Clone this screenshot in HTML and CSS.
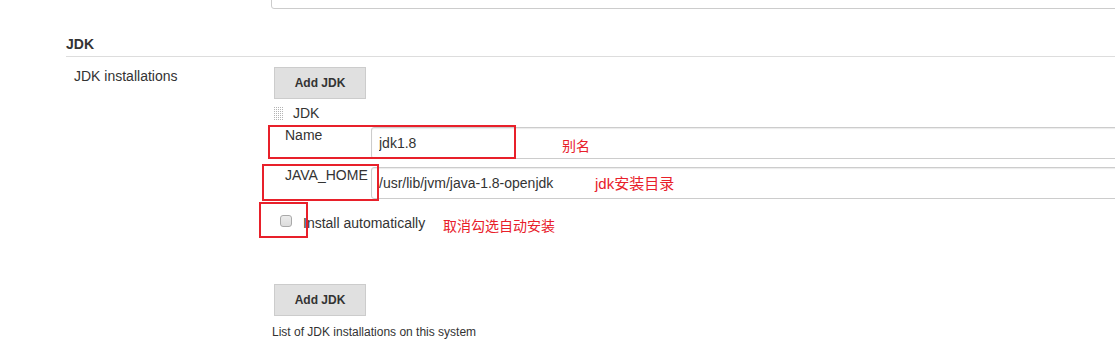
FILE: index.html
```html
<!DOCTYPE html>
<html>
<head>
  <link rel="stylesheet" href="styles.css">
</head>
<body>
  <div class="page">
    <div class="top-field"></div>

    <div class="section">
      <div class="section-title">JDK</div>
      <div class="row">
        <div class="row-label">JDK installations</div>
        <div class="row-body">
          <button class="btn">Add JDK</button>

          <div class="chunk">
            <div class="chunk-head">
              <span class="handle"></span>
              <span>JDK</span>
            </div>
            <div class="field">
              <div class="field-label">Name</div>
              <input class="text-input" type="text" value="jdk1.8">
            </div>
            <div class="field">
              <div class="field-label">JAVA_HOME</div>
              <input class="text-input" type="text" value="/usr/lib/jvm/java-1.8-openjdk">
            </div>
            <label class="check-row">
              <input class="check" type="checkbox">
              <span>Install automatically</span>
            </label>
          </div>

          <button class="btn btn-bottom">Add JDK</button>
          <div class="help">List of JDK installations on this system</div>
        </div>
      </div>
    </div>

    <!-- annotations drawn over the screenshot -->
    <div class="mark mark-name"></div>
    <div class="mark mark-home"></div>
    <div class="mark mark-check"></div>
    <div class="note note-name">别名</div>
    <div class="note note-home">jdk安装目录</div>
    <div class="note note-check">取消勾选自动安装</div>
  </div>
</body>
</html>
```

FILE: styles.css
```css
body {
  margin: 0;
  font-family: "Liberation Sans", Arial, sans-serif;
  font-size: 14px;
  color: #333;
  background: #fff;
}
.page {
  position: relative;
  width: 1115px;
  height: 349px;
  overflow: hidden;
}
.top-field {
  margin: -23px 0 0 271px;
  width: 1000px;
  height: 32px;
  box-sizing: border-box;
  border: 1px solid #ccc;
  border-radius: 3px;
}
.section {
  padding-left: 66px;
}
.section-title {
  margin-top: 25px;
  padding-bottom: 2px;
  line-height: 20px;
  font-weight: bold;
  border-bottom: 1px solid #ddd;
}
.row {
  display: flex;
  padding: 10px 0 0 8px;
}
.row-label {
  width: 200px;
  flex-shrink: 0;
  line-height: 18px;
}
.row-body {
  display: flex;
  flex-direction: column;
  align-items: flex-start;
  width: 1000px;
  flex-shrink: 0;
}
.btn {
  width: 92px;
  height: 32px;
  padding: 0;
  border: 1px solid #ccc;
  background: #e0e0e0;
  color: #333;
  font-family: "Liberation Sans", Arial, sans-serif;
  font-size: 12px;
  font-weight: bold;
}
.chunk {
  width: 100%;
}
.chunk-head {
  display: flex;
  align-items: center;
  gap: 9px;
  margin: 6px 0 0 -1px;
  line-height: 16px;
}
.handle {
  width: 11px;
  height: 15px;
  background-image:
    linear-gradient(to right, #fff 1px, transparent 1px),
    linear-gradient(to bottom, #fff 1px, #b4b4b4 1px);
  background-size: 2px 2px;
}
.field {
  display: flex;
  align-items: flex-start;
  margin-top: 6px;
}
.field + .field {
  margin-top: 8px;
}
.field-label {
  width: 86px;
  padding-left: 11px;
  flex-shrink: 0;
  line-height: 16px;
}
.text-input {
  flex: 1;
  height: 32px;
  box-sizing: border-box;
  padding: 0 7px;
  border: 1px solid #ccc;
  border-radius: 3px;
  box-shadow: inset 0 1px 1px rgba(0, 0, 0, 0.08);
  font-family: "Liberation Sans", Arial, sans-serif;
  font-size: 14px;
  color: #333;
  outline: none;
}
.check-row {
  display: flex;
  align-items: flex-start;
  gap: 11px;
  margin-top: 16px;
  padding-left: 6px;
  line-height: 16px;
}
.check {
  appearance: none;
  -webkit-appearance: none;
  width: 12px;
  height: 12px;
  margin: 0;
  border: 1px solid #a9a9a9;
  border-radius: 3px;
  background: linear-gradient(#ececec, #dcdcdc);
}
.btn-bottom {
  margin-top: 53px;
}
.help {
  margin: 8px 0 0 -2px;
  font-size: 12px;
  line-height: 16px;
}
.mark {
  position: absolute;
  box-sizing: border-box;
  border: 2px solid #e8202a;
}
.mark-name {
  left: 268px;
  top: 125px;
  width: 248px;
  height: 34px;
}
.mark-home {
  left: 262px;
  top: 164px;
  width: 117px;
  height: 37px;
}
.mark-check {
  left: 259px;
  top: 202px;
  width: 49px;
  height: 36px;
}
.note {
  position: absolute;
  color: #e8202a;
  font-family: "Liberation Sans", "Noto Sans CJK SC", sans-serif;
  font-size: 14px;
  line-height: 16px;
  white-space: nowrap;
}
.note-name {
  left: 562px;
  top: 138px;
}
.note-home {
  left: 595px;
  top: 176px;
  font-size: 15px;
}
.note-check {
  left: 443px;
  top: 218px;
}
```
